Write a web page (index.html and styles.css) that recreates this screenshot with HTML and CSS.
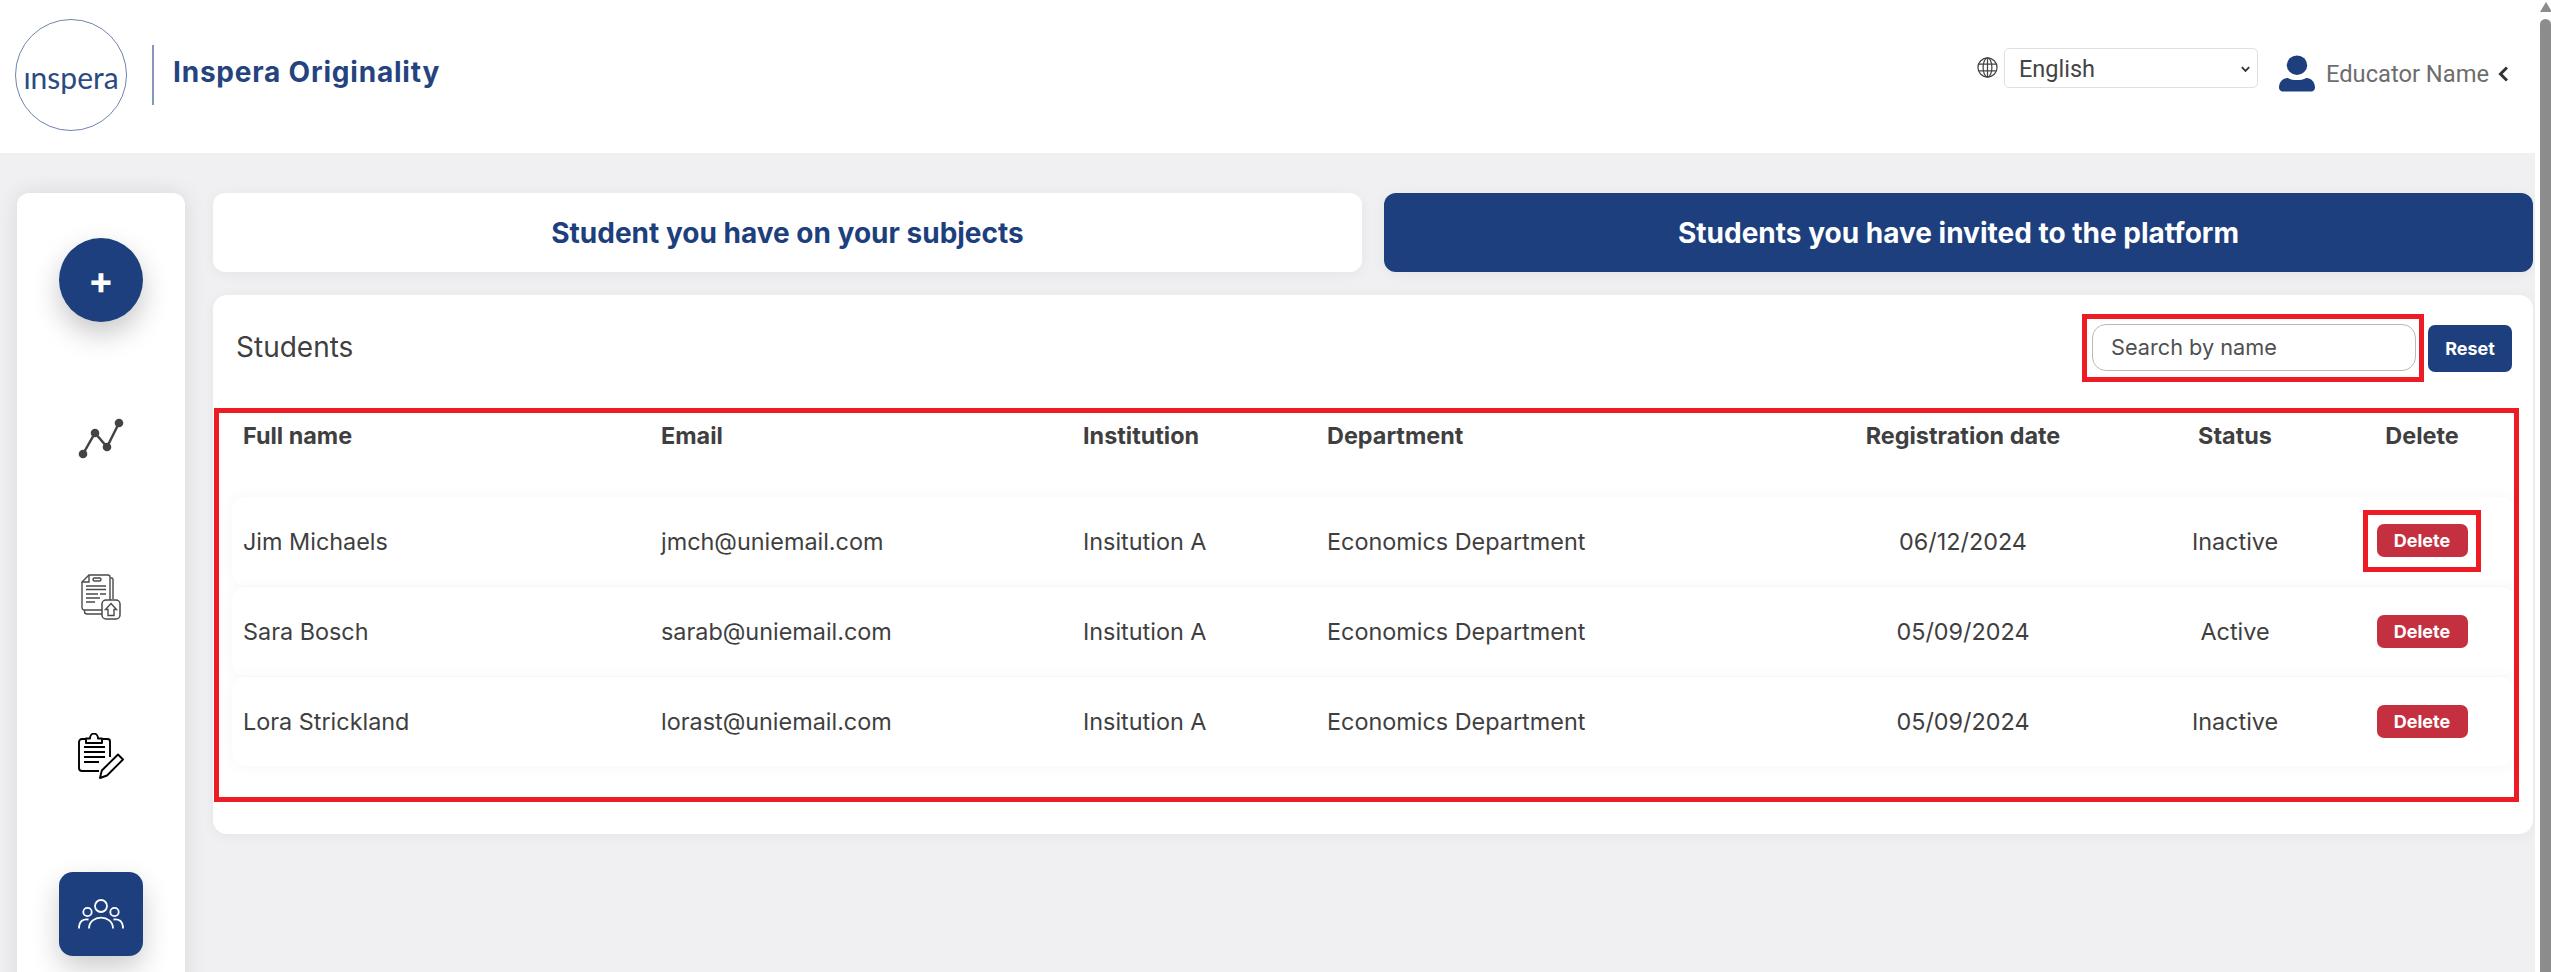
FILE: index.html
```html
<!DOCTYPE html>
<html lang="en">
<head>
<meta charset="utf-8">
<title>Inspera Originality</title>
<link rel="stylesheet" href="styles.css">
</head>
<body>
<div class="viewport">
  <header class="topbar">
    <div class="brand">
      <div class="logo-circle"><span>ınspera</span></div>
      <div class="brand-rule"></div>
      <div class="brand-name">Inspera Originality</div>
    </div>
    <div class="top-actions">
      <svg class="globe" viewBox="0 0 22 22" fill="none" stroke="#444" stroke-width="1.3"><circle cx="11" cy="11" r="10"/><ellipse cx="11" cy="11" rx="4.600" ry="10"/><path d="M11 1v20M1.800 7.500h18.400M1.800 14.500h18.400"/></svg>
      <div class="lang">
        <span>English</span>
        <svg viewBox="0 0 12 8" fill="none" stroke="#333" stroke-width="2"><path d="M2 2l4 4 4-4"/></svg>
      </div>
      <div class="user">
        <svg class="user-icon" viewBox="0 0 37 37" fill="#1e3f7e"><ellipse cx="18.500" cy="10" rx="10.500" ry="10"/><path d="M0 33c0-6 4-10 9-10 3 1.500 6 2.300 9.500 2.300s6.500-.8 9.500-2.300c5 0 9 4 9 10 0 2.500-1.500 4-4 4H4c-2.500 0-4-1.500-4-4z"/></svg>
        <span class="user-name">Educator Name</span>
        <svg class="user-chev" viewBox="0 0 10 16" fill="none" stroke="#333" stroke-width="3"><path d="M9 1.500L2.500 8 9 14.500"/></svg>
      </div>
    </div>
  </header>
  <div class="page">
    <aside class="sidebar">
      <div class="side-btn round"><span>+</span></div>
      <div class="side-icon">
        <svg viewBox="0 0 46 46" width="46" height="46" fill="#444" stroke="none"><path d="M5 39L17 18 29 32 41 8" fill="none" stroke="#444" stroke-width="2.500"/><circle cx="5" cy="39" r="4.300"/><circle cx="17" cy="18" r="4.300"/><circle cx="29" cy="32" r="4.300"/><circle cx="41" cy="8" r="4.300"/></svg>
      </div>
      <div class="side-icon">
        <svg viewBox="0 0 40 46" width="40" height="46" fill="none" stroke="#4a4a4a" stroke-width="1.400"><path d="M28 36H3.500A2.500 2.500 0 0 1 1 33.500V8l7-7h19a2 2 0 0 1 2 2v23"/><path d="M8 1v7H1"/><path d="M29.500 4h1a1.500 1.500 0 0 1 1.500 1.500V25M3.500 36v1.500A2.500 2.500 0 0 0 6 40h15"/><rect x="12" y="4" width="8" height="3" rx="1.500"/><path d="M5 12h20M5 15.500h20M5 20h12M19 20h6M5 24h14M5 28h9" stroke-width="1.500"/><rect x="21" y="26" width="18" height="19" rx="4" fill="#fff" stroke-width="1.500"/><path d="M30 29.500l5.500 6H33v6h-6v-6h-2.500z"/></svg>
      </div>
      <div class="side-icon">
        <svg viewBox="0 0 46 46" width="46" height="46" fill="none" stroke="#000" stroke-width="1.900"><path d="M8 6H4a3 3 0 0 0-3 3v26a3 3 0 0 0 3 3h17"/><path d="M25 6h4.500a2.500 2.500 0 0 1 2.500 2.500V24"/><path d="M8 10V5.500h4c0-6.500 8-6.500 8 0h4V10z" stroke-linejoin="round"/><path d="M6 14h21M6 19h21M6 24h21M6 29h15"/><path d="M22 45l1.800-7.500L40 21.500l5 5-16 16z" stroke-linejoin="round"/></svg>
      </div>
      <div class="side-btn square">
        <svg viewBox="0 0 46 30" width="46" height="30" fill="none" stroke="#fff" stroke-width="1.800"><circle cx="23" cy="7" r="6"/><circle cx="9.500" cy="13" r="4.200"/><circle cx="36.500" cy="13" r="4.200"/><path d="M11 29.500c0-14.500 24-14.500 24 0"/><path d="M1 29.500c0-7.500 4.500-10 9.500-9M45 29.500c0-7.500-4.500-10-9.500-9"/></svg>
      </div>
    </aside>
    <main class="content">
      <div class="tabs">
        <div class="tab">Student you have on your subjects</div>
        <div class="tab active">Students you have invited to the platform</div>
      </div>
      <section class="card">
        <div class="card-head">
          <h2>Students</h2>
          <div class="search-tools">
            <div class="mark search-mark"><div class="search">Search by name</div></div>
            <button class="reset">Reset</button>
          </div>
        </div>
        <div class="mark table-mark">
          <div class="grid-row head-row">
            <div>Full name</div>
            <div>Email</div>
            <div>Institution</div>
            <div>Department</div>
            <div class="mid">Registration date</div>
            <div class="mid">Status</div>
            <div class="mid">Delete</div>
          </div>
          <div class="rows">
            <div class="grid-row body-row">
              <div>Jim Michaels</div><div>jmch@uniemail.com</div><div>Insitution A</div><div>Economics Department</div><div class="mid">06/12/2024</div><div class="mid">Inactive</div>
              <div class="mid"><div class="mark del-mark"><button class="del">Delete</button></div></div>
            </div>
            <div class="grid-row body-row">
              <div>Sara Bosch</div><div>sarab@uniemail.com</div><div>Insitution A</div><div>Economics Department</div><div class="mid">05/09/2024</div><div class="mid">Active</div>
              <div class="mid"><button class="del">Delete</button></div>
            </div>
            <div class="grid-row body-row">
              <div>Lora Strickland</div><div>lorast@uniemail.com</div><div>Insitution A</div><div>Economics Department</div><div class="mid">05/09/2024</div><div class="mid">Inactive</div>
              <div class="mid"><button class="del">Delete</button></div>
            </div>
          </div>
        </div>
      </section>
    </main>
  </div>
  <div class="scrollbar"><div class="arrow"></div><div class="thumb"></div></div>
</div>
</body>
</html>
```
FILE: styles.css
```css
* { box-sizing: border-box; }
html, body { margin: 0; height: 100%; overflow: hidden; }
body { background: #f0f0f3; font-family: "Inter", "Liberation Sans", sans-serif; color: #3f3f3f; }
.viewport { position: relative; width: 2551px; height: 972px; overflow: hidden; padding-right: 18px; }

.topbar { height: 153px; background: #fff; display: flex; justify-content: space-between; margin-right: -2px; padding: 19px 27px 0 15px; }
.brand { display: flex; align-items: flex-start; }
.logo-circle { width: 112px; height: 112px; border: 1.500px solid #6f84ad; border-radius: 50%; display: flex; align-items: center; justify-content: center; color: #2c4a82; font: 400 30px "Lato", sans-serif; padding-top: 3px; }
.brand-rule { width: 2px; height: 60px; background: #8497bc; margin: 26px 19px 0 25px; }
.brand-name { color: #25447f; font: 700 28px "Inter", sans-serif; margin-top: 36px; letter-spacing: 0.8px; }

.top-actions { display: flex; align-items: flex-start; padding-top: 29px; }
.globe { width: 21px; height: 21px; margin-top: 9px; margin-right: 6px; }
.lang { width: 254px; height: 40px; border: 1px solid #dedfe2; border-radius: 5px; display: flex; align-items: center; justify-content: space-between; padding: 2px 6px 0 14px; font: 400 23.500px "Roboto", sans-serif; color: #444; }
.lang svg { width: 11px; height: 8px; }
.user { display: flex; align-items: flex-start; margin-left: 21px; padding-top: 7px; }
.user-icon { width: 36px; height: 37px; }
.user-name { font: 400 23.700px "Roboto", sans-serif; color: #6d6d6d; margin-left: 11px; margin-top: 5px; }
.user-chev { width: 10px; height: 16px; margin-left: 9px; margin-top: 11px; }

.page { display: flex; padding: 40px 0 0 17px; gap: 28px; }
.sidebar { width: 168px; height: 900px; flex: none; background: #fff; border-radius: 12px 12px 0 0; box-shadow: 0 0 22px rgba(0,0,0,.1); display: flex; flex-direction: column; align-items: center; padding-top: 45px; }
.side-btn { width: 84px; height: 84px; background: #1e3f7e; display: flex; align-items: center; justify-content: center; color: #fff; flex: none; }
.round { border-radius: 50%; box-shadow: 0 12px 28px rgba(0,0,0,.22); font: 700 38px "Inter", sans-serif; }
.square { border-radius: 14px; box-shadow: 0 12px 28px rgba(0,0,0,.2); margin-top: 93px; }
.side-icon { display: flex; justify-content: center; align-items: center; height: 46px; flex: none; }
.side-icon:nth-child(2) { margin-top: 93px; }
.side-icon:nth-child(3) { margin-top: 113px; }
.side-icon:nth-child(4) { margin-top: 113px; }

.content { flex: 1; min-width: 0; }
.tabs { display: flex; gap: 22px; }
.tab { flex: 1; height: 79px; background: #fff; border-radius: 12px; display: flex; align-items: center; justify-content: center; font-size: 28px; font-weight: 700; color: #1e3f7e; box-shadow: 0 2px 14px rgba(0,0,0,.05); }
.tab.active { background: #1e3f7e; color: #fff; }

.card { margin-top: 23px; height: 539px; background: #fff; border-radius: 14px; box-shadow: 0 2px 14px rgba(0,0,0,.05); padding: 19px 14px 0 1px; }
.card-head { display: flex; justify-content: space-between; align-items: center; padding-left: 22px; height: 68px; }
.card-head h2 { margin: 0 0 3px; font-size: 28px; font-weight: 400; color: #3f3f3f; }
.search-tools { display: flex; align-items: center; gap: 4px; padding-right: 7px; }
.mark { border: 5px solid #ed1c24; }
.search-mark { padding: 5px 3px 6px 5px; width: 342px; height: 68px; }
.search { height: 47px; border: 1px solid #b9b9b9; border-radius: 14px; padding-left: 18px; font-size: 21.700px; line-height: 44px; color: #505050; }
.reset { width: 84px; height: 47px; border: 0; border-radius: 7px; background: #1e3f7e; color: #fff; font: 700 18px "Inter", sans-serif; padding: 0; }

.table-mark { margin-top: 26px; height: 393.500px; padding-left: 13px; }
.grid-row { display: grid; grid-template-columns: 418px 422px 244px 470px 354px 190px 184px; align-items: center; }
.grid-row > div { padding-left: 11px; font-size: 23.400px; }
.grid-row > .mid { padding-left: 0; text-align: center; }
.head-row { height: 84px; align-items: start; padding-top: 8px; }
.head-row > div { font-weight: 700; }
.rows { display: flex; flex-direction: column; gap: 1.500px; }
.body-row { height: 88.700px; background: #fff; border-radius: 14px; box-shadow: 0 0 16px rgba(0,0,0,.04); }

.del { width: 91px; height: 33px; border: 0; border-radius: 7px; background: #c53040; color: #fff; font: 700 18px "Inter", sans-serif; padding: 0; vertical-align: middle; }
.del-mark { display: inline-block; width: 118px; height: 62px; padding: 9px 8px 10px; vertical-align: middle; }
.del-mark .del { display: block; margin: 0 auto; }

.scrollbar { position: absolute; top: 0; right: 0; width: 16px; height: 972px; background: #fff; }
.arrow { position: absolute; top: 2px; right: -1px; width: 0; height: 0; border-left: 6.500px solid transparent; border-right: 6.500px solid transparent; border-bottom: 10px solid #8c8c8c; }
.thumb { position: absolute; top: 19px; right: 0; width: 11.500px; height: 953px; background: #8c8c8c; border-radius: 6px 6px 0 0; }
```
